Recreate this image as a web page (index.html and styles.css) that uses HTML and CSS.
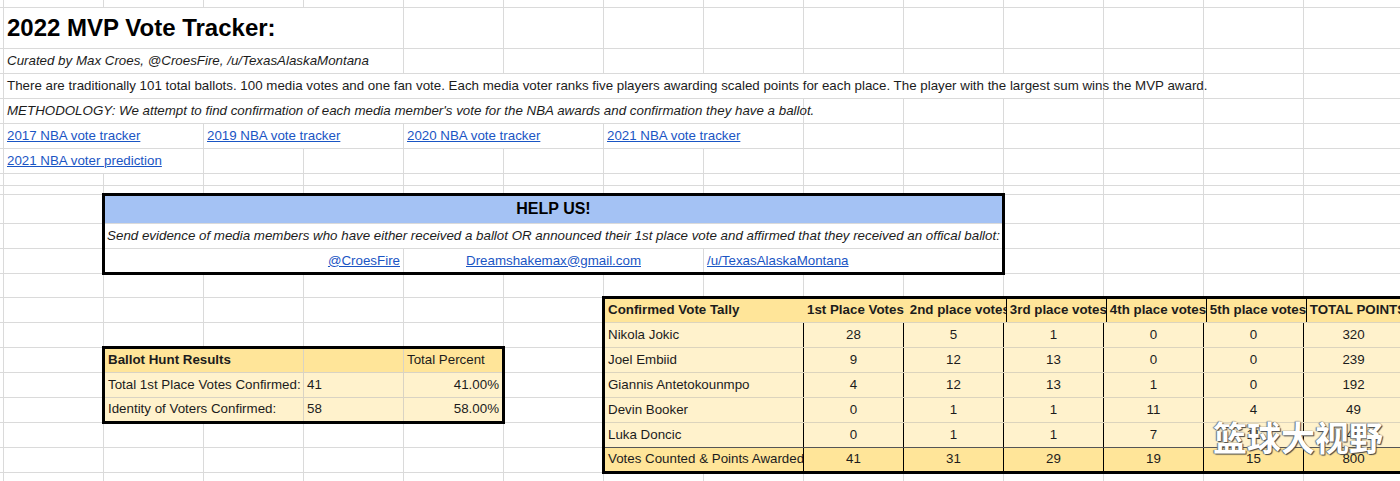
FILE: index.html
```html
<!DOCTYPE html>
<html lang="en">
<head>
<meta charset="utf-8">
<title>2022 MVP Vote Tracker</title>
<link rel="stylesheet" href="styles.css">
</head>
<body>
<main class="sheet">
  <div class="cell title">2022 MVP Vote Tracker:</div>
  <div class="cell curated">Curated by Max Croes, @CroesFire, /u/TexasAlaskaMontana</div>
  <div class="cell intro">There are traditionally 101 total ballots. 100 media votes and one fan vote. Each media voter ranks five players awarding scaled points for each place. The player with the largest sum wins the MVP award.</div>
  <div class="cell method">METHODOLOGY: We attempt to find confirmation of each media member's vote for the NBA awards and confirmation they have a ballot.</div>
  <div class="links">
    <div class="cell"><a class="link" href="#">2017 NBA vote tracker</a></div>
    <div class="cell"><a class="link" href="#">2019 NBA vote tracker</a></div>
    <div class="cell"><a class="link" href="#">2020 NBA vote tracker</a></div>
    <div class="cell"><a class="link" href="#">2021 NBA vote tracker</a></div>
  </div>
  <div class="cell pred"><a class="link" href="#">2021 NBA voter prediction</a></div>

  <section class="help">
    <div class="help-head">HELP US!</div>
    <div class="help-text">Send evidence of media members who have either received a ballot OR announced their 1st place vote and affirmed that they received an offical ballot:</div>
    <div class="help-links">
      <div class="cell right"><a class="link" href="#">@CroesFire</a></div>
      <div class="cell center"><a class="link" href="#">Dreamshakemax@gmail.com</a></div>
      <div class="cell"><a class="link" href="#">/u/TexasAlaskaMontana</a></div>
    </div>
  </section>

  <section class="ballot">
    <div class="bcell head strong">Ballot Hunt Results</div>
    <div class="bcell head"></div>
    <div class="bcell head">Total Percent</div>
    <div class="bcell">Total 1st Place Votes Confirmed:</div>
    <div class="bcell">41</div>
    <div class="bcell num">41.00%</div>
    <div class="bcell">Identity of Voters Confirmed:</div>
    <div class="bcell">58</div>
    <div class="bcell num">58.00%</div>
  </section>

  <section class="tally">
    <div class="trow thead">
      <div class="tc name open">Confirmed Vote Tally</div>
      <div class="tc open mid">1st Place Votes</div>
      <div class="tc">2nd place votes</div>
      <div class="tc">3rd place votes</div>
      <div class="tc">4th place votes</div>
      <div class="tc">5th place votes</div>
      <div class="tc">TOTAL POINTS</div>
    </div>
    <div class="trow">
      <div class="tc name">Nikola Jokic</div>
      <div class="tc">28</div><div class="tc">5</div><div class="tc">1</div><div class="tc">0</div><div class="tc">0</div><div class="tc">320</div>
    </div>
    <div class="trow">
      <div class="tc name">Joel Embiid</div>
      <div class="tc">9</div><div class="tc">12</div><div class="tc">13</div><div class="tc">0</div><div class="tc">0</div><div class="tc">239</div>
    </div>
    <div class="trow">
      <div class="tc name">Giannis Antetokounmpo</div>
      <div class="tc">4</div><div class="tc">12</div><div class="tc">13</div><div class="tc">1</div><div class="tc">0</div><div class="tc">192</div>
    </div>
    <div class="trow">
      <div class="tc name">Devin Booker</div>
      <div class="tc">0</div><div class="tc">1</div><div class="tc">1</div><div class="tc">11</div><div class="tc">4</div><div class="tc">49</div>
    </div>
    <div class="trow">
      <div class="tc name">Luka Doncic</div>
      <div class="tc">0</div><div class="tc">1</div><div class="tc">1</div><div class="tc">7</div><div class="tc">11</div><div class="tc">44</div>
    </div>
    <div class="trow total">
      <div class="tc name">Votes Counted &amp; Points Awarded</div>
      <div class="tc">41</div><div class="tc">31</div><div class="tc">29</div><div class="tc">19</div><div class="tc">15</div><div class="tc">800</div>
    </div>
  </section>

  <div class="watermark">篮球大视野</div>
</main>
</body>
</html>
```

FILE: styles.css
```css
html, body {
  margin: 0;
  padding: 0;
  background: #fff;
  overflow: hidden;
}

body {
  font-family: "Liberation Sans", Arial, sans-serif;
  font-size: 13.33px;
  color: #1c1c1c;
}

.sheet {
  position: relative;
  width: 1400px;
  height: 481px;
  overflow: hidden;
  display: grid;
  grid-template-columns: 3px repeat(14, 99px);
  grid-template-rows: 7px 40px 24px 24px 24px 24px 24px 11px 8px 28px 24px 24px 23px 24px 24px 24px 24px 24px 24px 24px 8px;
  gap: 1px;
  background-color: #fff;
  background-image:
    repeating-linear-gradient(to right, transparent 0 3px, #dadada 3px 4px, transparent 4px 100px),
    linear-gradient(to bottom,
      transparent 0 7px, #dadada 7px 8px,
      transparent 8px 48px, #dadada 48px 49px,
      transparent 49px 73px, #dadada 73px 74px,
      transparent 74px 98px, #dadada 98px 99px,
      transparent 99px 123px, #dadada 123px 124px,
      transparent 124px 148px, #dadada 148px 149px,
      transparent 149px 173px, #dadada 173px 174px,
      transparent 174px 185px, #dadada 185px 186px,
      transparent 186px 194px, #dadada 194px 195px,
      transparent 195px 223px, #dadada 223px 224px,
      transparent 224px 248px, #dadada 248px 249px,
      transparent 249px 273px, #dadada 273px 274px,
      transparent 274px 297px, #dadada 297px 298px,
      transparent 298px 322px, #dadada 322px 323px,
      transparent 323px 347px, #dadada 347px 348px,
      transparent 348px 372px, #dadada 372px 373px,
      transparent 373px 397px, #dadada 397px 398px,
      transparent 398px 422px, #dadada 422px 423px,
      transparent 423px 447px, #dadada 447px 448px,
      transparent 448px 472px, #dadada 472px 473px,
      transparent 473px);
}

.cell {
  background: #fff;
  display: flex;
  align-items: center;
  padding: 0 3px 1px;
  white-space: nowrap;
  min-width: 0;
}

.cell.right { justify-content: flex-end; }
.cell.center { justify-content: center; }

.title {
  grid-row: 2;
  grid-column: 2 / 6;
  font-size: 24px;
  font-weight: 700;
  color: #000;
}

.curated {
  grid-row: 3;
  grid-column: 2 / 6;
  font-style: italic;
}

.intro {
  grid-row: 4;
  grid-column: 2 / 13;
}

.method {
  grid-row: 5;
  grid-column: 2 / 10;
  font-style: italic;
}

.links {
  grid-row: 6;
  grid-column: 2 / 10;
  display: grid;
  grid-template-columns: repeat(4, 199px);
  column-gap: 1px;
}

.pred {
  grid-row: 7;
  grid-column: 2 / 4;
}

.link {
  color: #1a55c4;
  text-decoration: underline;
}

/* HELP US box */
.help {
  grid-row: 10 / 13;
  grid-column: 3 / 12;
  margin: -2px;
  border: 3px solid #000;
  display: grid;
  grid-template-rows: 27px 24px 23px;
  row-gap: 1px;
  background: #dadada;
}

.help-head {
  background: #a4c2f4;
  display: flex;
  align-items: center;
  justify-content: center;
  padding-bottom: 1px;
  font-size: 16px;
  font-weight: 700;
  color: #000;
}

.help-text {
  background: #fff;
  display: flex;
  align-items: center;
  justify-content: center;
  padding-bottom: 2px;
  font-style: italic;
  white-space: nowrap;
}

.help-links {
  display: grid;
  grid-template-columns: 298px 299px 1fr;
  column-gap: 1px;
}

/* Ballot hunt box */
.ballot {
  grid-row: 16 / 19;
  grid-column: 3 / 7;
  margin: -2px;
  border: 3px solid #000;
  display: grid;
  grid-template-columns: 198px 99px 1fr;
  grid-template-rows: 23px 24px 23px;
  gap: 1px;
  background: #d9d3c3;
}

.bcell {
  background: #fff2cc;
  display: flex;
  align-items: center;
  padding: 0 3px 2px;
  white-space: nowrap;
}

.bcell.head { background: #ffe599; }
.bcell.strong { font-weight: 700; }
.bcell.num { justify-content: flex-end; }

/* Vote tally box */
.tally {
  grid-row: 14 / 21;
  grid-column: 8 / 16;
  margin: -2px;
  border: 3px solid #000;
  display: flex;
  flex-direction: column;
  overflow: hidden;
  background: #fff2cc;
}

.trow {
  display: flex;
  flex: 0 0 25px;
  box-sizing: border-box;
  border-bottom: 1px solid #dcd4bd;
  background: #fff2cc;
}

.trow:nth-last-child(2) { border-bottom-color: #555; }

.trow.thead {
  flex-basis: 24px;
  background: #ffe599;
  font-weight: 700;
}

.trow.total {
  flex-basis: 23px;
  border-bottom: 0;
  background: #ffe599;
}

.tc {
  flex: 0 0 100px;
  box-sizing: border-box;
  border-right: 1px solid #000;
  display: flex;
  align-items: center;
  justify-content: center;
  padding: 0 3px 2px;
  white-space: nowrap;
  overflow: hidden;
}

.tc.name {
  flex-basis: 199px;
  justify-content: flex-start;
}

.thead .tc { justify-content: flex-start; }
.thead .tc.open { border-right: 0; overflow: visible; }
.thead .tc.mid { justify-content: center; }

.watermark {
  position: absolute;
  left: 1213px;
  top: 420px;
  font-family: "Noto Sans CJK SC", sans-serif;
  font-size: 34px;
  font-weight: 700;
  line-height: 1;
  color: #fff;
  white-space: nowrap;
  text-shadow: 0 0 1px #555, 1px 1px 1px #444, -1px 0 1px #777;
}
```
